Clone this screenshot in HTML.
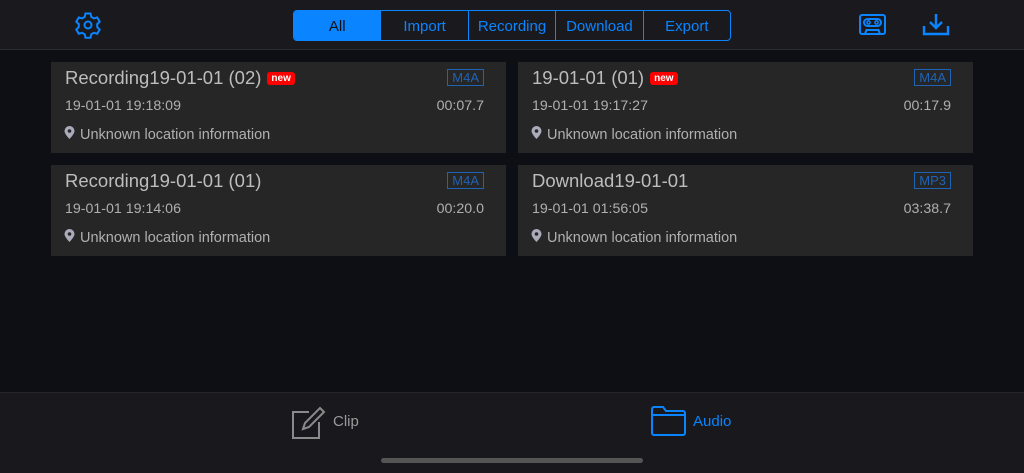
<!DOCTYPE html>
<html><head><style>
*{margin:0;padding:0;box-sizing:border-box}
body{width:1024px;height:473px;background:#0e0f14;font-family:"Liberation Sans",sans-serif;position:relative;overflow:hidden}
.hdr{position:absolute;left:0;top:0;width:1024px;height:50px;background:#1a1a1e;border-bottom:1px solid #2a2a2e}
.seg{position:absolute;left:293px;top:10px;width:438px;height:31px;border:1px solid #0a84ff;border-radius:4px;display:flex;overflow:hidden}
.seg div{flex:1;color:#0a84ff;font-size:15px;text-align:center;line-height:31px;border-left:1px solid #0a84ff}
.seg div:first-child{border-left:none;background:#0a84ff;color:#111}
.card{position:absolute;width:455px;height:91px;background:#262626}
.t{position:absolute;left:14px;top:5px;font-size:18.5px;color:#bdbdbd}
.new{display:inline-block;background:#f00;color:#fff;font-size:10px;font-weight:bold;border-radius:3px;padding:0 4px;line-height:13px;vertical-align:3px;margin-left:6px}
.fmt{position:absolute;right:22px;top:7px;border:1px solid #1f63b5;color:#1f63b5;font-size:13px;padding:0 4px;line-height:15px}
.d{position:absolute;left:14px;top:36px;font-size:14.2px;color:#b0b0b0}
.dur{position:absolute;right:22px;top:36px;font-size:14.2px;color:#b0b0b0}
.loc{position:absolute;left:13px;top:64px;font-size:14.5px;color:#b0b0b0}
.loc svg{vertical-align:0px;margin-right:5px}
.ftr{position:absolute;left:0;top:392px;width:1024px;height:81px;background:#19191d;border-top:1px solid #26262a}
</style></head><body>
<div class="hdr">
<svg style="position:absolute;left:74px;top:11px" width="28" height="28" viewBox="0 0 28 28" fill="none" stroke="#0a84ff" stroke-width="2"><path d="M11.5 2.5h5l.8 3.4 2.6 1.5 3.3-1 2.5 4.3-2.5 2.4v3l2.5 2.4-2.5 4.3-3.3-1-2.6 1.5-.8 3.4h-5l-.8-3.4-2.6-1.5-3.3 1-2.5-4.3 2.5-2.4v-3L2.3 10.7l2.5-4.3 3.3 1 2.6-1.5z"/><circle cx="14" cy="14" r="3.5"/></svg>
<div class="seg"><div>All</div><div>Import</div><div>Recording</div><div>Download</div><div>Export</div></div>
<svg style="position:absolute;left:859px;top:14px" width="27" height="21" viewBox="0 0 27 21" fill="none" stroke="#0a84ff" stroke-width="2"><rect x="1" y="1" width="25" height="19" rx="2"/><rect x="5" y="5" width="17" height="7" rx="3.5"/><circle cx="9.5" cy="8.5" r="1.6" stroke-width="1.5"/><circle cx="17.5" cy="8.5" r="1.6" stroke-width="1.5"/><path d="M6 20l1.5-4h12l1.5 4"/></svg>
<svg style="position:absolute;left:922px;top:13px" width="28" height="23" viewBox="0 0 28 23" fill="none" stroke="#0a84ff" stroke-width="2.4"><path d="M14 1v13M8 9l6 6 6-6M2 13v8h24v-8"/></svg>
</div>
<div class="card" style="left:51px;top:62px"><div class="t">Recording19-01-01 (02)<span class="new">new</span></div><div class="fmt">M4A</div><div class="d">19-01-01 19:18:09</div><div class="dur">00:07.7</div><div class="loc"><svg width="11" height="13" viewBox="0 0 11 13"><path d="M5.5 0a5 5 0 0 1 5 5c0 3-5 8-5 8s-5-5-5-8a5 5 0 0 1 5-5z" fill="#aab"/><circle cx="5.5" cy="5" r="1.8" fill="#262626"/></svg>Unknown location information</div></div>
<div class="card" style="left:518px;top:62px"><div class="t">19-01-01 (01)<span class="new">new</span></div><div class="fmt">M4A</div><div class="d">19-01-01 19:17:27</div><div class="dur">00:17.9</div><div class="loc"><svg width="11" height="13" viewBox="0 0 11 13"><path d="M5.5 0a5 5 0 0 1 5 5c0 3-5 8-5 8s-5-5-5-8a5 5 0 0 1 5-5z" fill="#aab"/><circle cx="5.5" cy="5" r="1.8" fill="#262626"/></svg>Unknown location information</div></div>
<div class="card" style="left:51px;top:165px"><div class="t">Recording19-01-01 (01)</div><div class="fmt">M4A</div><div class="d">19-01-01 19:14:06</div><div class="dur">00:20.0</div><div class="loc"><svg width="11" height="13" viewBox="0 0 11 13"><path d="M5.5 0a5 5 0 0 1 5 5c0 3-5 8-5 8s-5-5-5-8a5 5 0 0 1 5-5z" fill="#aab"/><circle cx="5.5" cy="5" r="1.8" fill="#262626"/></svg>Unknown location information</div></div>
<div class="card" style="left:518px;top:165px"><div class="t">Download19-01-01</div><div class="fmt">MP3</div><div class="d">19-01-01 01:56:05</div><div class="dur">03:38.7</div><div class="loc"><svg width="11" height="13" viewBox="0 0 11 13"><path d="M5.5 0a5 5 0 0 1 5 5c0 3-5 8-5 8s-5-5-5-8a5 5 0 0 1 5-5z" fill="#aab"/><circle cx="5.5" cy="5" r="1.8" fill="#262626"/></svg>Unknown location information</div></div>
<div class="ftr">
<svg style="position:absolute;left:291px;top:12px" width="36" height="34" viewBox="0 0 36 34" fill="none" stroke="#8a8a8a" stroke-width="2"><path d="M18 7H2v26h26V17"/><path d="M12 24l2-6 15-15 4 4-15 15z"/></svg>
<div style="position:absolute;left:333px;top:20px;font-size:15px;color:#9a9a9a">Clip</div>
<svg style="position:absolute;left:651px;top:13px" width="35" height="30" viewBox="0 0 35 30" fill="none" stroke="#0a84ff" stroke-width="2"><path d="M1 3a2 2 0 0 1 2-2h9l3 4h17a2 2 0 0 1 2 2v20a2 2 0 0 1-2 2H3a2 2 0 0 1-2-2z"/><path d="M1 9h33"/></svg>
<div style="position:absolute;left:693px;top:20px;font-size:15px;color:#0a84ff">Audio</div>
<div style="position:absolute;left:381px;top:65px;width:262px;height:5px;border-radius:3px;background:#555"></div>
</div>
</body></html>
